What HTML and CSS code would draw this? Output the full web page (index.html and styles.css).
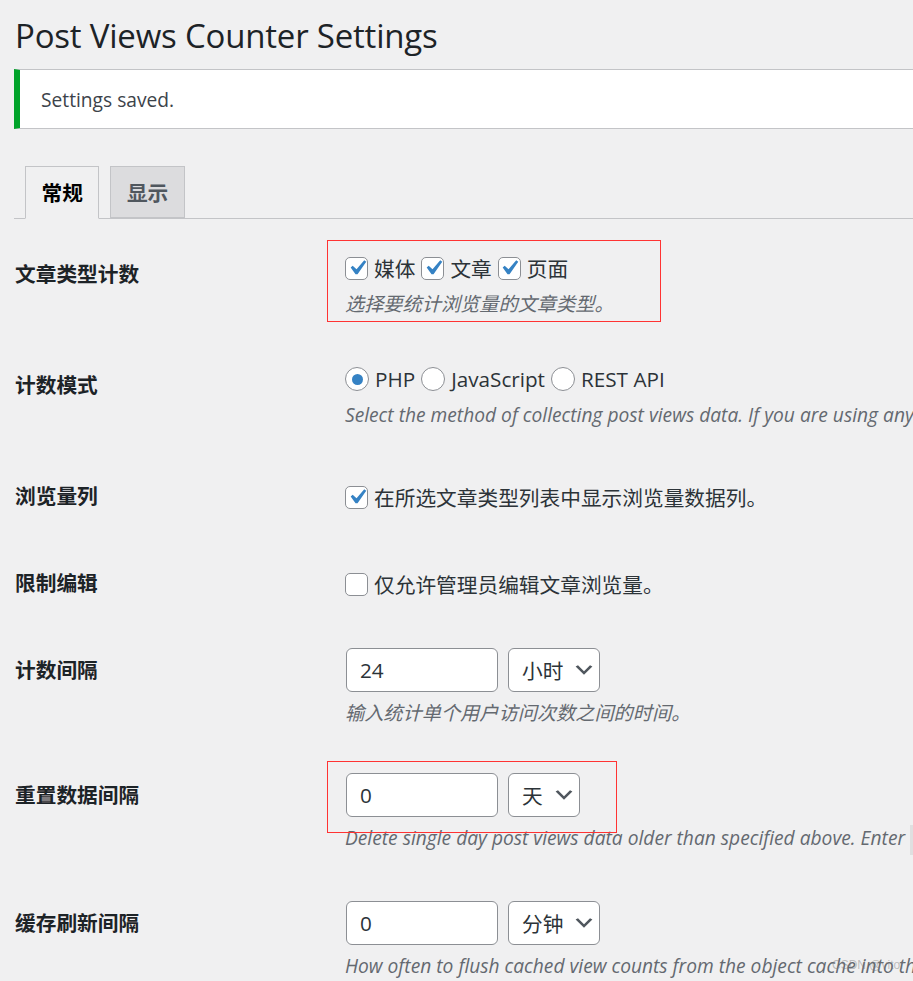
FILE: index.html
```html
<!DOCTYPE html>
<html lang="zh-CN">
<head>
<meta charset="utf-8">
<title>Post Views Counter Settings</title>
<link rel="stylesheet" href="styles.css">
</head>
<body>
<div class="wrap">
  <h1 class="title">Post Views Counter Settings</h1>
  <div class="notice"><p>Settings saved.</p></div>
  <nav class="tabs">
    <a class="tab tab-active">常规</a>
    <a class="tab">显示</a>
  </nav>
  <div class="form">
    <div class="row row-two">
      <div class="label">文章类型计数</div>
      <div class="field">
        <div class="line">
          <label class="opt"><span class="cb checked"><svg viewBox="0 0 20 20"><path d="M14.83 4.89l1.34.94-5.81 8.38H9.02L5.780 9.67l1.34-1.25 2.57 2.4z"/></svg></span>媒体</label>
          <label class="opt"><span class="cb checked"><svg viewBox="0 0 20 20"><path d="M14.83 4.89l1.34.94-5.81 8.38H9.02L5.78 9.67l1.34-1.25 2.57 2.4z"/></svg></span>文章</label>
          <label class="opt"><span class="cb checked"><svg viewBox="0 0 20 20"><path d="M14.83 4.89l1.34.94-5.81 8.38H9.02L5.78 9.67l1.34-1.25 2.57 2.4z"/></svg></span>页面</label>
        </div>
        <p class="desc">选择要统计浏览量的文章类型。</p>
      </div>
    </div>
    <div class="row row-two">
      <div class="label">计数模式</div>
      <div class="field">
        <div class="line">
          <label class="opt"><span class="radio checked"></span>PHP</label>
          <label class="opt"><span class="radio"></span>JavaScript</label>
          <label class="opt"><span class="radio"></span>REST API</label>
        </div>
        <p class="desc">Select the method of collecting post views data. If you are using any of the caching plugins select JavaScript or REST API (if available).</p>
      </div>
    </div>
    <div class="row row-one">
      <div class="label">浏览量列</div>
      <div class="field">
        <div class="line">
          <label class="opt"><span class="cb checked"><svg viewBox="0 0 20 20"><path d="M14.83 4.89l1.34.94-5.81 8.38H9.02L5.78 9.67l1.34-1.25 2.57 2.4z"/></svg></span>在所选文章类型列表中显示浏览量数据列。</label>
        </div>
      </div>
    </div>
    <div class="row row-one">
      <div class="label">限制编辑</div>
      <div class="field">
        <div class="line">
          <label class="opt"><span class="cb"></span>仅允许管理员编辑文章浏览量。</label>
        </div>
      </div>
    </div>
    <div class="row row-input">
      <div class="label">计数间隔</div>
      <div class="field">
        <div class="controls">
          <span class="input">24</span>
          <span class="select">小时<svg viewBox="0 0 20 20"><path d="M5 6l5 5 5-5 2 1-7 7-7-7 2-1z"/></svg></span>
        </div>
        <p class="desc">输入统计单个用户访问次数之间的时间。</p>
      </div>
    </div>
    <div class="row row-input">
      <div class="label">重置数据间隔</div>
      <div class="field">
        <div class="controls">
          <span class="input">0</span>
          <span class="select">天<svg viewBox="0 0 20 20"><path d="M5 6l5 5 5-5 2 1-7 7-7-7 2-1z"/></svg></span>
        </div>
        <p class="desc">Delete single day post views data older than specified above. Enter <code>0</code> (number zero) if you want to preserve your data regardless of its age.</p>
      </div>
    </div>
    <div class="row row-input">
      <div class="label">缓存刷新间隔</div>
      <div class="field">
        <div class="controls">
          <span class="input">0</span>
          <span class="select">分钟<svg viewBox="0 0 20 20"><path d="M5 6l5 5 5-5 2 1-7 7-7-7 2-1z"/></svg></span>
        </div>
        <p class="desc">How often to flush cached view counts from the object cache into the database.</p>
      </div>
    </div>
  </div>
</div>
<div class="mark mark-1"></div>
<div class="mark mark-2"></div>
<div class="watermark">CSDN @vitor</div>
</body>
</html>
```

FILE: styles.css
```css
html, body {
  margin: 0;
  padding: 0;
}
body {
  background: #f0f0f1;
  color: #3c434a;
  font-family: "Open Sans", "Noto Sans CJK SC", sans-serif;
  font-size: 20.7px;
  overflow: hidden;
  width: 913px;
  height: 981px;
  position: relative;
}
.wrap {
  width: 1500px;
  padding-left: 15px;
}
.title {
  margin: 14px 0 0;
  font-size: 33px;
  letter-spacing: -0.2px;
  font-weight: 400;
  line-height: 44px;
  color: #1d2327;
}
.notice {
  margin: 11px 0 0 -1px;
  background: #fff;
  border: 1px solid #c3c4c7;
  border-left: 6px solid #00a32a;
  border-right: none;
  height: 58px;
  display: flex;
  align-items: center;
  padding-left: 21px;
}
.notice p {
  margin: 0;
  font-size: 19.2px;
  color: #3c434a;
}
.tabs {
  margin: 37px 0 0 -1px;
  display: flex;
  align-items: flex-end;
  border-bottom: 1px solid #c3c4c7;
  padding-left: 1px;
}
.tab {
  display: block;
  margin-left: 10px;
  padding: 0 15.5px;
  height: 50px;
  line-height: 50px;
  border: 1px solid #c3c4c7;
  background: #dcdcde;
  color: #50575e;
  font-weight: 700;
  font-size: 20.7px;
  font-family: "Noto Sans CJK SC", sans-serif;
}
.tab + .tab {
  margin-left: 11px;
}
.tab-active {
  background: #f0f0f1;
  color: #000;
  border-bottom-color: #f0f0f1;
  margin-bottom: -1px;
  height: 51px;
  line-height: 51px;
}
.form {
  margin-top: 12px;
}
.row {
  display: flex;
}
.label {
  width: 330px;
  flex: none;
  padding-top: 29px;
  line-height: 27px;
  font-weight: 700;
  color: #1d2327;
  font-family: "Noto Sans CJK SC", sans-serif;
}
.field {
  flex: 1;
}
.row-two .field { padding: 22px 0 24px; }
.row-one .field { padding: 29px 0 28px; }
.row-input .field { padding: 21px 0 25px; }
.line {
  display: flex;
  align-items: center;
  height: 30px;
  white-space: nowrap;
}
.opt {
  display: inline-flex;
  align-items: center;
  gap: 6px;
  margin-right: 6px;
  color: #2c3338;
}
.cb {
  width: 21px;
  height: 21px;
  border: 1px solid #8c8f94;
  border-radius: 5px;
  background: #fff;
  display: inline-flex;
  align-items: center;
  justify-content: center;
  flex: none;
}
.cb svg {
  width: 30px;
  height: 30px;
  fill: #3582c4;
  flex: none;
}
.radio {
  width: 22px;
  height: 22px;
  border: 1px solid #8c8f94;
  border-radius: 50%;
  background: #fff;
  display: inline-flex;
  align-items: center;
  justify-content: center;
  flex: none;
}
.radio.checked::after {
  content: "";
  width: 11px;
  height: 11px;
  border-radius: 50%;
  background: #3582c4;
}
.desc {
  margin: 6px 0 0;
  font-size: 19.2px;
  line-height: 29px;
  font-style: italic;
  color: #646970;
  white-space: nowrap;
}
.desc code {
  font-style: normal;
  font-family: "Liberation Mono", monospace;
  background: rgba(0, 0, 0, 0.07);
  padding: 4px 7px;
  font-size: 19px;
}
.controls {
  display: flex;
  gap: 10px;
}
.input {
  box-sizing: border-box;
  width: 152px;
  height: 44px;
  border: 1px solid #8c8f94;
  border-radius: 6px;
  background: #fff;
  padding-left: 13px;
  display: flex;
  align-items: center;
  color: #2c3338;
  margin-left: 1px;
}
.select {
  box-sizing: border-box;
  height: 44px;
  border: 1px solid #8c8f94;
  border-radius: 6px;
  background: #fff;
  padding: 0 3px 0 13px;
  display: flex;
  align-items: center;
  color: #2c3338;
}
.select svg {
  width: 24px;
  height: 24px;
  margin-left: 9px;
  fill: #50575e;
}
.mark {
  position: absolute;
  border: 1px solid #f33;
  box-sizing: border-box;
}
.mark-1 { left: 327px; top: 240px; width: 334px; height: 82px; }
.mark-2 { left: 327px; top: 761px; width: 290px; height: 72px; }
.watermark {
  position: absolute;
  left: 832px;
  top: 958px;
  font-size: 12px;
  color: rgba(120, 120, 120, 0.45);
  font-family: "Liberation Sans", sans-serif;
}
```
